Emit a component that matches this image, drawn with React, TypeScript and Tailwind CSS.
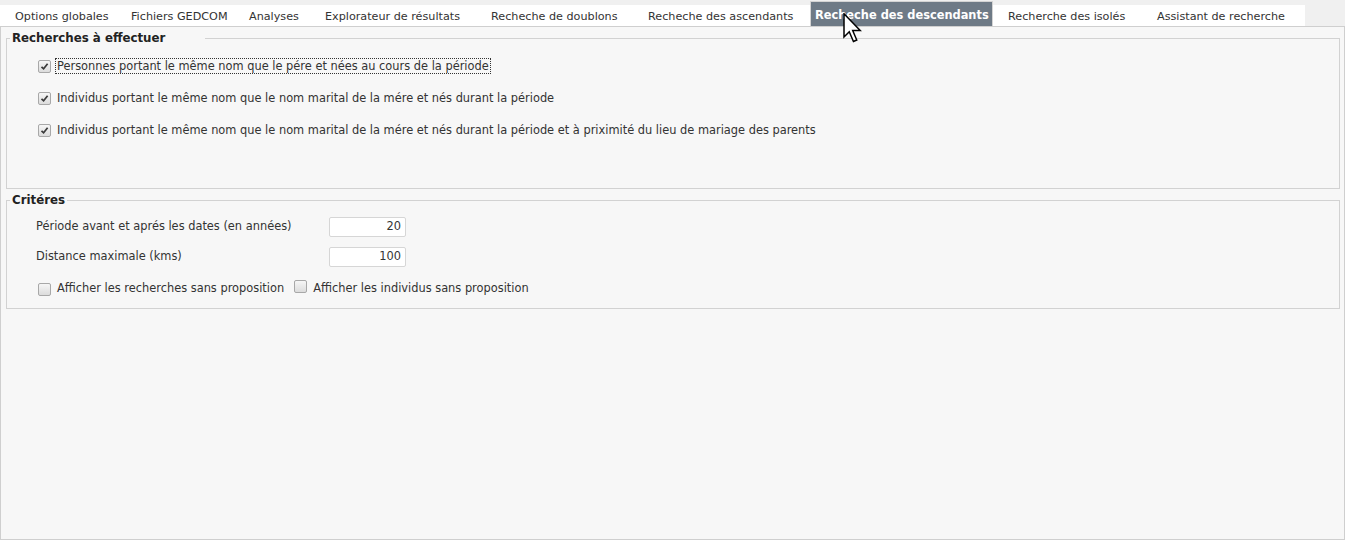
import React from "react";

const tabs = [
  { label: "Options globales", w: "w-[116px]", pl: "pl-0" },
  { label: "Fichiers GEDCOM", w: "w-[118px]", pl: "pl-0" },
  { label: "Analyses", w: "w-[76px]", pl: "pl-0" },
  { label: "Explorateur de résultats", w: "w-[166px]", pl: "pl-0" },
  { label: "Recheche de doublons", w: "w-[157px]", pl: "pl-0" },
  { label: "Recheche des ascendants", w: "w-[162px]", pl: "pl-0" },
  { label: "Recheche des descendants", w: "w-[183px]", pl: "pl-[4px]", active: true },
  { label: "Recherche des isolés", w: "w-[164px]", pl: "pl-[15px]" },
  { label: "Assistant de recherche", w: "w-[148px]", pl: "pl-0" },
];

function Check({ checked }: { checked?: boolean }) {
  return (
    <span className="inline-flex h-[13px] w-[13px] shrink-0 items-center justify-center rounded-[2px] border border-[#a8a8a8] bg-gradient-to-b from-[#f6f6f6] to-[#dcdcdc]">
      {checked && (
        <svg width="9" height="9" viewBox="0 0 9 9">
          <path d="M1.5 4.8 L3.6 6.8 L7.6 1.8" fill="none" stroke="#3a3a3a" strokeWidth="1.7" />
        </svg>
      )}
    </span>
  );
}

function CheckRow({ label, focus }: { label: string; focus?: boolean }) {
  return (
    <div className="flex h-[16px] items-center">
      <Check checked />
      <span className={`ml-[5px] px-[1px] leading-[14px] ${focus ? "outline-1 outline-dotted outline-[#333]" : ""}`}>
        {label}
      </span>
    </div>
  );
}

function NumberField({ value }: { value: string }) {
  return (
    <div className="flex h-[20px] w-[77px] items-center justify-end rounded-[2px] border border-[#d6d6d6] bg-white pr-[4px] text-[#333]">
      {value}
    </div>
  );
}

export default function App() {
  return (
    <div
      className="relative h-[540px] w-[1345px] overflow-hidden bg-[#f0f0f0] text-[11.4px] text-[#333]"
      style={{ fontFamily: '"DejaVu Sans", Verdana, sans-serif' }}
    >
      {/* tab strip */}
      <div className="flex h-[26px] items-end text-[11.2px]">
        <div className="flex h-[21px] w-[1305px] items-stretch bg-white">
          <div className="w-[15px]" />
          {tabs.map((t) =>
            t.active ? (
              <div
                key={t.label}
                className={`-mt-[4px] flex h-[25px] items-center border border-b-0 border-[#d4d4d4] bg-[#6e7a86] pt-[3px] text-[11.4px] font-bold text-white ${t.w} ${t.pl}`}
              >
                {t.label}
              </div>
            ) : (
              <div key={t.label} className={`flex items-center pt-[3px] ${t.w} ${t.pl}`}>
                {t.label}
              </div>
            )
          )}
        </div>
      </div>

      {/* panel */}
      <div className="h-[514px] border border-[#cfcfcf] bg-[#f7f7f7] pt-[4px]">
        <fieldset className="ml-[5px] mr-[4px] h-[158px] border border-[#d2d2d2] px-0">
          <legend className="ml-[3px] w-[195px] px-[2px] text-[11.8px] font-bold leading-[15px] text-[#222]">
            Recherches à effectuer
          </legend>
          <div className="flex flex-col gap-[16px] pl-[31px] pt-[12px]">
            <CheckRow focus label="Personnes portant le même nom que le pére et nées au cours de la période" />
            <CheckRow label="Individus portant le même nom que le nom marital de la mére et nés durant la période" />
            <CheckRow label="Individus portant le même nom que le nom marital de la mére et nés durant la période et à priximité du lieu de mariage des parents" />
          </div>
        </fieldset>

        <fieldset className="ml-[5px] mr-[4px] mt-[4px] h-[116px] border border-[#d2d2d2] px-0">
          <legend className="ml-[3px] px-[2px] text-[11.8px] font-bold leading-[15px] text-[#222]">Critéres</legend>
          <div className="flex flex-col pl-[29px] pt-[9px]">
            <div className="flex h-[20px] items-center">
              <span className="w-[293px]">Période avant et aprés les dates (en années)</span>
              <NumberField value="20" />
            </div>
            <div className="mt-[10px] flex h-[20px] items-center">
              <span className="w-[293px]">Distance maximale (kms)</span>
              <NumberField value="100" />
            </div>
            <div className="mt-[14px] flex h-[16px] items-center pl-[2px]">
              <Check />
              <span className="ml-[6px]">Afficher les recherches sans proposition</span>
              <span className="ml-[10px]">
                <Check />
              </span>
              <span className="ml-[6px]">Afficher les individus sans proposition</span>
            </div>
          </div>
        </fieldset>
      </div>

      {/* mouse pointer */}
      <svg className="absolute left-[843px] top-[13px]" width="20" height="30" viewBox="0 0 13 20">
        <path
          d="M0.5 0.5 L0.5 16 L4 12.5 L6.8 19 L9 18 L6.3 11.7 L11.3 11.7 Z"
          fill="#fff"
          stroke="#000"
          strokeWidth="1"
          strokeLinejoin="miter"
        />
      </svg>
    </div>
  );
}
